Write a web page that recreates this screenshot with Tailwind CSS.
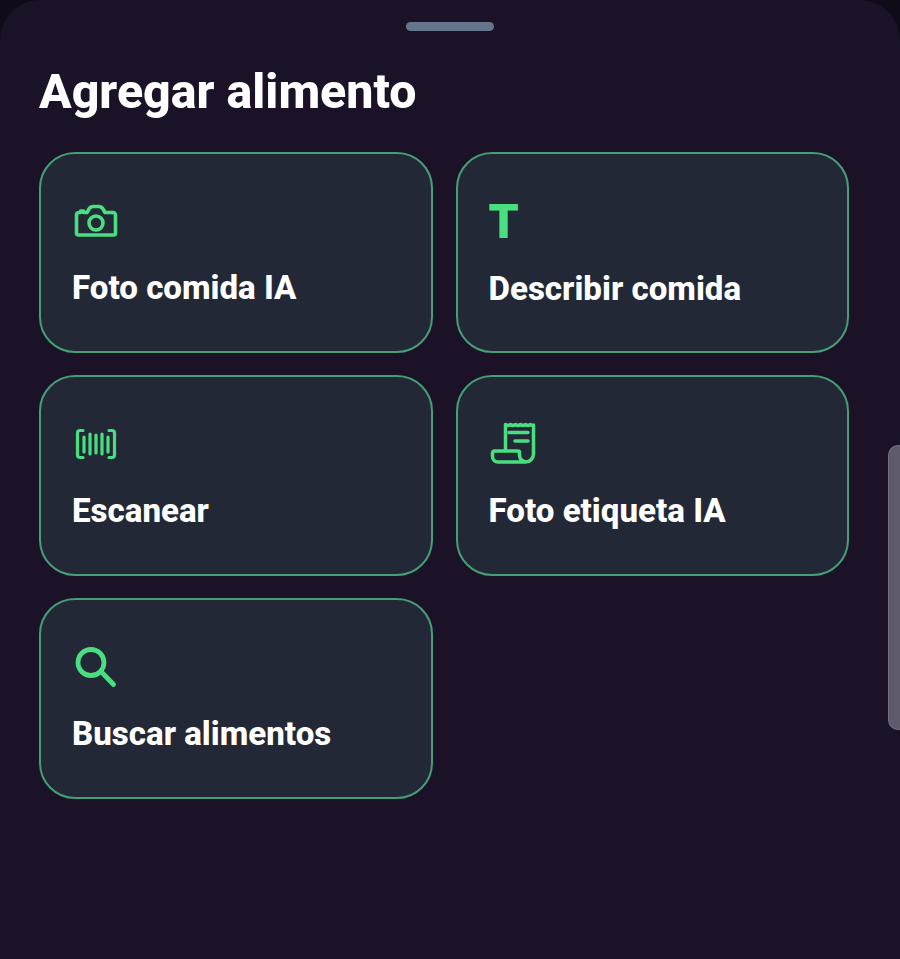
<!DOCTYPE html>
<html lang="es">
<head>
    <meta name="viewport" content="width=device-width, initial-scale=1.0">
    <title>Agregar alimento</title>
    <script src="https://cdn.jsdelivr.net/npm/@tailwindcss/browser@4"></script>
</head>
<body class="bg-[#110b19] font-['Roboto',sans-serif] text-white overflow-hidden">
    <div class="relative h-[959px] w-[900px] bg-[#1b1228] rounded-t-[40px] pt-[22px] pl-[39px] pr-[51px]">

        <!-- Tirador -->
        <div class="mx-auto w-[88px] h-[9px] rounded-full bg-[#64748b] relative left-[6px]"></div>

        <h1 class="mt-[31px] text-[48.300px] leading-[60px] font-extrabold">Agregar alimento</h1>

        <!-- Opciones -->
        <div class="mt-[30px] grid grid-cols-2 gap-x-[23px] gap-y-[22px]">
            <div class="h-[201px] rounded-[36px] border-2 border-[#459f76] bg-[#222836] px-[31px] pt-[44px]">
                <svg class="w-12 h-12 text-[#4ade80]" viewBox="0 0 48 48" fill="none" stroke="currentColor" stroke-width="3.600" stroke-linejoin="round" stroke-linecap="round">
                    <path d="M7 14.500h1.500v-1.500h3v1.500h3.500l2-3.500c1-1.500 2-2.500 4-2.500h6c2 0 3 1 4 2.500l2 3.500h8a2.500 2.500 0 0 1 2.500 2.500v18a2 2 0 0 1-2 2h-35a2 2 0 0 1-2-2v-18.500a2.500 2.500 0 0 1 2.500-2z"/>
                    <circle cx="24" cy="25" r="7"/>
                </svg>
                <p class="mt-[20px] text-[33.100px] leading-[44px] font-extrabold">Foto comida IA</p>
            </div>
            <div class="h-[201px] rounded-[36px] border-2 border-[#459f76] bg-[#222836] px-[31px] pt-[44px]">
                <p class="h-12 text-[48px] leading-[48px] font-black text-[#4ade80]">T</p>
                <p class="mt-[21px] text-[33.100px] leading-[44px] font-extrabold">Describir comida</p>
            </div>
            <div class="h-[201px] rounded-[36px] border-2 border-[#459f76] bg-[#222836] px-[31px] pt-[44px]">
                <svg class="w-12 h-12 text-[#4ade80]" viewBox="0 0 48 48" fill="none" stroke="currentColor" stroke-width="3.200" stroke-linecap="round" stroke-linejoin="round">
                    <path d="M11 9.500h-3a2.500 2.500 0 0 0-2.500 2.500v22a2.500 2.500 0 0 0 2.500 2.500h3"/>
                    <path d="M37 9.500h3a2.500 2.500 0 0 1 2.500 2.500v22a2.500 2.500 0 0 1-2.500 2.500h-3"/>
                    <path d="M12 16v15M18 13v20M24 14v18M30 13v20M36 16v15"/>
                </svg>
                <p class="mt-[20px] text-[33.100px] leading-[44px] font-extrabold">Escanear</p>
            </div>
            <div class="h-[201px] rounded-[36px] border-2 border-[#459f76] bg-[#222836] px-[31px] pt-[44px]">
                <svg class="w-12 h-12 text-[#4ade80]" viewBox="0 0 48 48" fill="none" stroke="currentColor" stroke-width="3.500" stroke-linecap="round" stroke-linejoin="round">
                    <path d="M16.500 30V3.500c1.700 1.200 3.300 1.200 5 0 1.700 1.200 3.300 1.200 5 0 1.700 1.200 3.300 1.200 5 0 1.700 1.200 3.300 1.200 5 0 1.700 1.200 3.300 1.200 5 0 1 .8 2 1 3 .5V33a8 8 0 0 1-8 8H9a5.500 5.500 0 0 1-5.500-5.500v-3.500a2 2 0 0 1 2-2H29c1 0 1.500 .5 1.500 1.500v3a7 7 0 0 0 7 6.500"/>
                    <path d="M20 11.500h19M26 20h13"/>
                </svg>
                <p class="mt-[20px] text-[33.100px] leading-[44px] font-extrabold">Foto etiqueta IA</p>
            </div>
            <div class="h-[201px] rounded-[36px] border-2 border-[#459f76] bg-[#222836] px-[31px] pt-[44px]">
                <svg class="w-12 h-12 text-[#4ade80]" viewBox="0 0 48 48" fill="none" stroke="currentColor" stroke-width="4.800" stroke-linecap="round">
                    <circle cx="19" cy="18.500" r="13"/>
                    <path d="M30 28.500l11.500 12"/>
                </svg>
                <p class="mt-[20px] text-[33.100px] leading-[44px] font-extrabold">Buscar alimentos</p>
            </div>
        </div>

        <!-- Barra lateral -->
        <div class="absolute right-0 top-[445px] w-[12px] h-[285px] rounded-l-[10px] border border-r-0 border-[#76717f] bg-[#5f5a6b]"></div>
    </div>
</body>
</html>
